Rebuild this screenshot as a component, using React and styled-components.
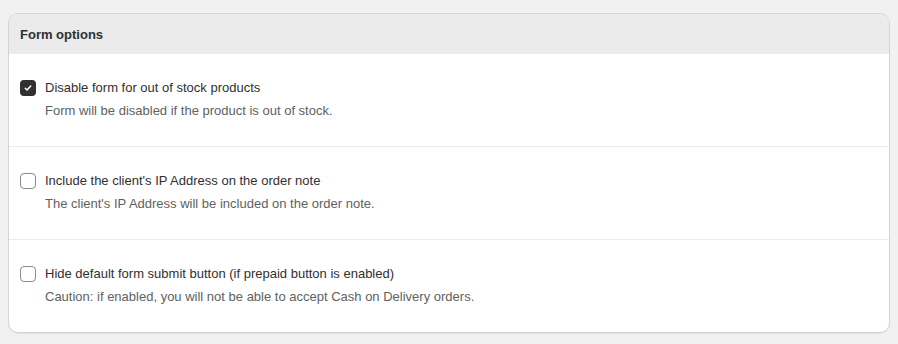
import styled, { createGlobalStyle } from 'styled-components'

const GlobalStyle = createGlobalStyle`
    body {
        margin:0;
        background:#f1f1f1;
        font-family:"Liberation Sans", Arial, sans-serif;
    }
`

const Page = styled.div`
    padding:13px 8px;
`

const Card = styled.section`
    background:#fff;
    border:1px solid #d4d4d4;
    border-radius:10px;
    box-shadow:0 1px 0 rgba(0,0,0,0.06);
    overflow:hidden;
`

const Header = styled.header`
    background:#ebebeb;
    height:40px;
    display:flex;
    align-items:center;
    padding:0 11px;
`

const Title = styled.h2`
    margin:0;
    font-size:13px;
    font-weight:700;
    color:#303030;
`

const Row = styled.div`
    display:flex;
    gap:9px;
    padding:24px 11px 25px 11px;
    border-top:${p => (p.first ? 'none' : '1px solid #ebebeb')};
`

const Box = styled.span`
    flex:none;
    width:16px;
    height:16px;
    margin-top:2px;
    box-sizing:border-box;
    border-radius:4px;
    display:flex;
    align-items:center;
    justify-content:center;
    background:${p => (p.checked ? '#303030' : '#fff')};
    border:${p => (p.checked ? 'none' : '1px solid #8a8a8a')};
`

const Texts = styled.div`
    display:flex;
    flex-direction:column;
    gap:3px;
`

const Label = styled.div`
    font-size:13px;
    line-height:20px;
    color:#303030;
`

const Help = styled.div`
    font-size:13px;
    line-height:20px;
    color:#616161;
`

const options = [
    {
        id: 1,
        label: 'Disable form for out of stock products',
        help: 'Form will be disabled if the product is out of stock.',
        checked: true,
    },
    {
        id: 2,
        label: "Include the client's IP Address on the order note",
        help: "The client's IP Address will be included on the order note.",
        checked: false,
    },
    {
        id: 3,
        label: 'Hide default form submit button (if prepaid button is enabled)',
        help: 'Caution: if enabled, you will not be able to accept Cash on Delivery orders.',
        checked: false,
    },
]

function Check() {
    return (
        <svg width="10" height="10" viewBox="0 0 10 10" fill="none">
            <path d="M2.3 5.3 L4.1 7 L7.7 3.1" stroke="#fff" strokeWidth="1.5" strokeLinecap="round" strokeLinejoin="round" />
        </svg>
    )
}

export default function App() {
    return (
        <Page>
            <GlobalStyle />
            <Card>
                <Header>
                    <Title>Form options</Title>
                </Header>
                {options.map((opt, i) => (
                    <Row key={opt.id} first={i === 0}>
                        <Box checked={opt.checked}>{opt.checked && <Check />}</Box>
                        <Texts>
                            <Label>{opt.label}</Label>
                            <Help>{opt.help}</Help>
                        </Texts>
                    </Row>
                ))}
            </Card>
        </Page>
    )
}
